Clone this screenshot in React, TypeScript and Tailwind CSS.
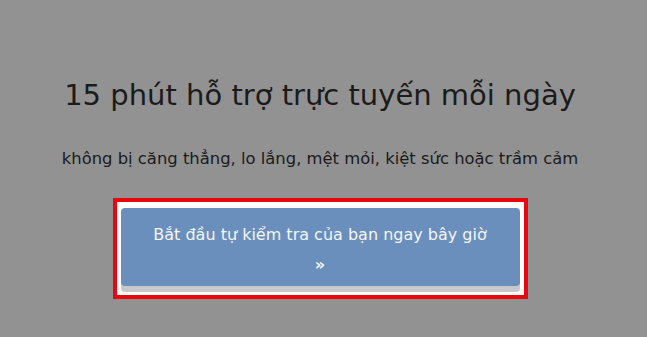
export default function App() {
  return (
    <div
      className="w-[647px] h-[337px] bg-[#929292] flex flex-col items-center overflow-hidden pr-[7px]"
      style={{ fontFamily: '"DejaVu Sans", "Open Sans", sans-serif' }}
    >
      <h1 className="mt-[77px] text-[29px] leading-[36px] text-[#1b1b1b] font-normal whitespace-nowrap">
        15 phút hỗ trợ trực tuyến mỗi ngày
      </h1>
      <p className="mt-[35px] text-[16.4px] leading-[21px] text-[#1b1b1b] whitespace-nowrap">
        không bị căng thẳng, lo lắng, mệt mỏi, kiệt sức hoặc trầm cảm
      </p>
      <div className="mt-[29px] w-[415px] border-[4px] border-[#e8080c] bg-white px-[4px] pt-[6px] pb-[3px]">
        <button className="w-full h-[78px] rounded-[4px] bg-[#6a8fbc] text-[#f4f6fa] text-[16px] leading-[30px] shadow-[0_6px_0_#c6c8ca] mb-[6px] px-4 pt-[6px]">
          Bắt đầu tự kiểm tra của bạn ngay bây giờ
          <br />
          <span className="font-bold">»</span>
        </button>
      </div>
    </div>
  );
}
